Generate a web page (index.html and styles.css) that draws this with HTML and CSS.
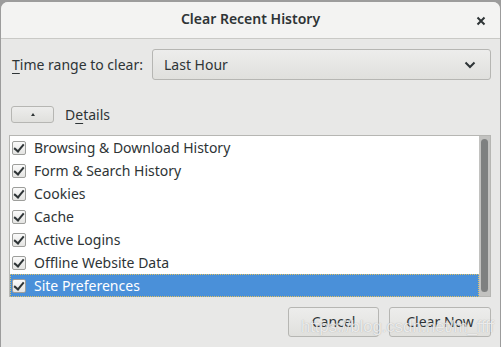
FILE: index.html
```html
<!DOCTYPE html>
<html lang="en">
<head>
    <meta charset="UTF-8">
    <title>Clear Recent History</title>
    <link rel="stylesheet" href="styles.css">
</head>
<body>
    <div class="window">
        <div class="titlebar">
            <span class="title">Clear Recent History</span>
            <span class="close">
                <svg width="10" height="10" viewBox="0 0 10 10"><path d="M1.5 1.5 L8.5 8.5 M8.5 1.5 L1.5 8.5" stroke="#2e3436" stroke-width="2"/></svg>
            </span>
        </div>

        <div class="content">
            <div class="range-row">
                <label class="range-label"><u>T</u>ime range to clear:</label>
                <div class="dropdown">
                    <span>Last Hour</span>
                    <svg width="12" height="8" viewBox="0 0 12 8"><path d="M1.5 1.5 L6 6 L10.5 1.5" fill="none" stroke="#2e3436" stroke-width="2"/></svg>
                </div>
            </div>

            <div class="details-row">
                <button class="toggle-btn"><span class="tri"></span></button>
                <span class="details-label">D<u>e</u>tails</span>
            </div>

            <div class="list">
                <div class="items">
                    <div class="item"><span class="check"></span>Browsing &amp; Download History</div>
                    <div class="item"><span class="check"></span>Form &amp; Search History</div>
                    <div class="item"><span class="check"></span>Cookies</div>
                    <div class="item"><span class="check"></span>Cache</div>
                    <div class="item"><span class="check"></span>Active Logins</div>
                    <div class="item"><span class="check"></span>Offline Website Data</div>
                    <div class="item selected"><span class="check"></span>Site Preferences</div>
                </div>
                <div class="scrollbar"><div class="thumb"></div></div>
            </div>

            <div class="buttons">
                <button class="btn cancel">Cancel</button>
                <button class="btn clear">Clear Now</button>
            </div>
        </div>
        <div class="watermark">https://blog.csdn.net/m_ffff</div>
    </div>
</body>
</html>
```

FILE: styles.css
```css
* {
    margin: 0;
    padding: 0;
    box-sizing: border-box;
}

body {
    background: #9c9c9c;
    font-family: 'Noto Sans', 'Open Sans', sans-serif;
    font-size: 14px;
    color: #2e3436;
    width: 501px;
    height: 347px;
    overflow: hidden;
}

.window {
    position: relative;
    margin: 2px 1px 0 1px;
    height: 345px;
    background: #e8e8e7;
    border-radius: 7px 7px 0 0;
    overflow: hidden;
}

.titlebar {
    height: 37px;
    background: #f3f3f2;
    border-bottom: 1px solid #c9c9c6;
    display: flex;
    align-items: center;
    justify-content: center;
    position: relative;
}

.title {
    font-weight: 600;
    font-size: 14px;
    color: #2e3436;
    padding-bottom: 3px;
}

.close {
    position: absolute;
    right: 14px;
    top: 14px;
    display: flex;
}

.content {
    padding: 10px 8px 0 8px;
}

.range-row {
    display: flex;
    align-items: center;
    height: 31px;
}

.range-label {
    width: 143px;
    padding-left: 3px;
}

.range-label u,
.details-label u {
    text-decoration-thickness: 1px;
    text-underline-offset: 3px;
}

.dropdown {
    flex: 1;
    height: 31px;
    margin-right: 1px;
    border: 1px solid #b6b6b3;
    border-radius: 3px;
    background: linear-gradient(#ededec, #e0e0dd);
    display: flex;
    align-items: center;
    justify-content: space-between;
    padding: 0 14px 0 11px;
}

.details-row {
    display: flex;
    align-items: center;
    margin-top: 25px;
    height: 18px;
}

.toggle-btn {
    width: 43px;
    height: 17px;
    margin-left: 2px;
    border: 1px solid #b6b6b3;
    border-radius: 3px;
    background: linear-gradient(#ededec, #e0e0dd);
    display: flex;
    align-items: center;
    justify-content: center;
}

.tri {
    width: 0;
    height: 0;
    border-left: 2.5px solid transparent;
    border-right: 2.5px solid transparent;
    border-bottom: 3px solid #2e3436;
}

.details-label {
    margin-left: 11px;
    padding-top: 1px;
}

.list {
    margin-top: 12px;
    height: 162px;
    margin-right: 1px;
    background: #fff;
    border: 1px solid #b6b6b3;
    display: flex;
}

.items {
    flex: 1;
}

.item {
    height: 23px;
    display: flex;
    align-items: center;
    line-height: 20px;
    padding-left: 2px;
}

.item.selected {
    background: #4a90d9;
    color: #fff;
    outline: 1px dotted #e0c060;
    outline-offset: -1px;
}

.check {
    width: 14px;
    height: 14px;
    margin-right: 8px;
    margin-top: 1px;
    border: 1px solid #9d9e9b;
    border-radius: 2px;
    background: linear-gradient(#fafafa, #e4e4e2);
    position: relative;
}

.check::after {
    content: "";
    position: absolute;
    left: 3px;
    top: 0px;
    width: 4px;
    height: 8px;
    border-right: 2.5px solid #2e3436;
    border-bottom: 2.5px solid #2e3436;
    transform: rotate(40deg);
}

.scrollbar {
    width: 11px;
    background: #c2c2c0;
    padding: 3px 2px 4px 2px;
}

.thumb {
    height: 100%;
    background: #7e8080;
    border-radius: 4px;
}

.buttons {
    display: flex;
    justify-content: flex-end;
    gap: 10px;
    margin-top: 10px;
    margin-right: 1px;
}

.btn {
    height: 30px;
    padding-bottom: 2px;
    border: 1px solid #b6b6b3;
    border-radius: 3px;
    background: linear-gradient(#ededec, #e0e0dd);
    font-family: inherit;
    font-size: 14px;
    color: #2e3436;
}

.cancel {
    width: 91px;
}

.clear {
    width: 102px;
}

.watermark {
    position: absolute;
    left: 300px;
    top: 315px;
    font-family: 'Liberation Sans', sans-serif;
    font-size: 17px;
    color: rgba(255, 255, 255, 0.75);
    text-shadow: 0 0 1px rgba(120, 120, 120, 0.6);
    letter-spacing: -0.2px;
}
```
